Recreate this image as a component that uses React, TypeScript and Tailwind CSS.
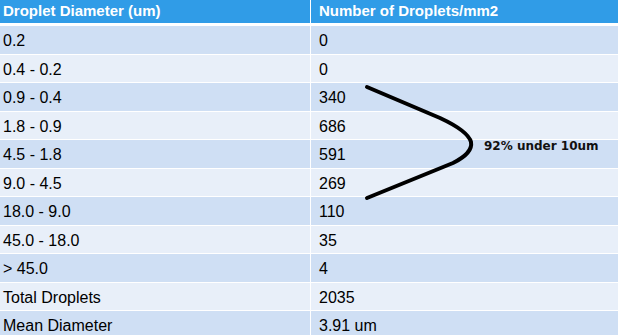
import React from "react";

const rows: [string, string][] = [
  ["0.2", "0"],
  ["0.4 - 0.2", "0"],
  ["0.9 - 0.4", "340"],
  ["1.8 - 0.9", "686"],
  ["4.5 - 1.8", "591"],
  ["9.0 - 4.5", "269"],
  ["18.0 - 9.0", "110"],
  ["45.0 - 18.0", "35"],
  ["> 45.0", "4"],
  ["Total Droplets", "2035"],
  ["Mean Diameter", "3.91 um"],
];

const App: React.FC = () => {
  return (
    <div
      className="relative w-[618px] h-[335px] overflow-hidden bg-white text-black"
      style={{ fontFamily: '"Liberation Sans", Arial, sans-serif' }}
    >
      <div className="grid grid-cols-[310px_307px] gap-x-[1px] bg-white">
        <div className="h-[23px] bg-[#309ce7] pl-[3px] text-[15px] leading-[22px] font-bold text-white">
          Droplet Diameter (um)
        </div>
        <div className="h-[23px] bg-[#309ce7] pl-[8px] text-[15px] leading-[22px] font-bold text-white">
          Number of Droplets/mm2
        </div>
      </div>
      <div className="h-[3px] bg-white" />
      <div className="flex flex-col gap-y-[1px] bg-white">
        {rows.map(([d, n], i) => {
          const bg = i % 2 === 0 ? "bg-[#cfdff4]" : "bg-[#e8eff9]";
          return (
            <div key={d} className="grid grid-cols-[310px_307px] gap-x-[1px]">
              <div className={`${bg} h-[27.55px] pl-[3px] pt-[6px] text-[16px] leading-[18px]`}>
                {d}
              </div>
              <div className={`${bg} h-[27.55px] pl-[8px] pt-[6px] text-[16px] leading-[18px]`}>
                {n}
              </div>
            </div>
          );
        })}
      </div>

      {/* bracket annotation */}
      <svg
        className="absolute left-0 top-0 pointer-events-none"
        width={618}
        height={335}
        viewBox="0 0 618 335"
      >
        <path
          d="M367 87 L440 118 Q468 131 471 142 Q473 153 453 163 L367 198"
          fill="none"
          stroke="#000"
          strokeWidth={4}
          strokeLinecap="round"
          strokeLinejoin="round"
        />
      </svg>
      <div
        className="absolute left-[484px] top-[138px] text-[12px] leading-[16px] font-bold text-[#111]"
        style={{ fontFamily: '"DejaVu Sans", Verdana, sans-serif' }}
      >
        92% under 10um
      </div>
    </div>
  );
};

export default App;
